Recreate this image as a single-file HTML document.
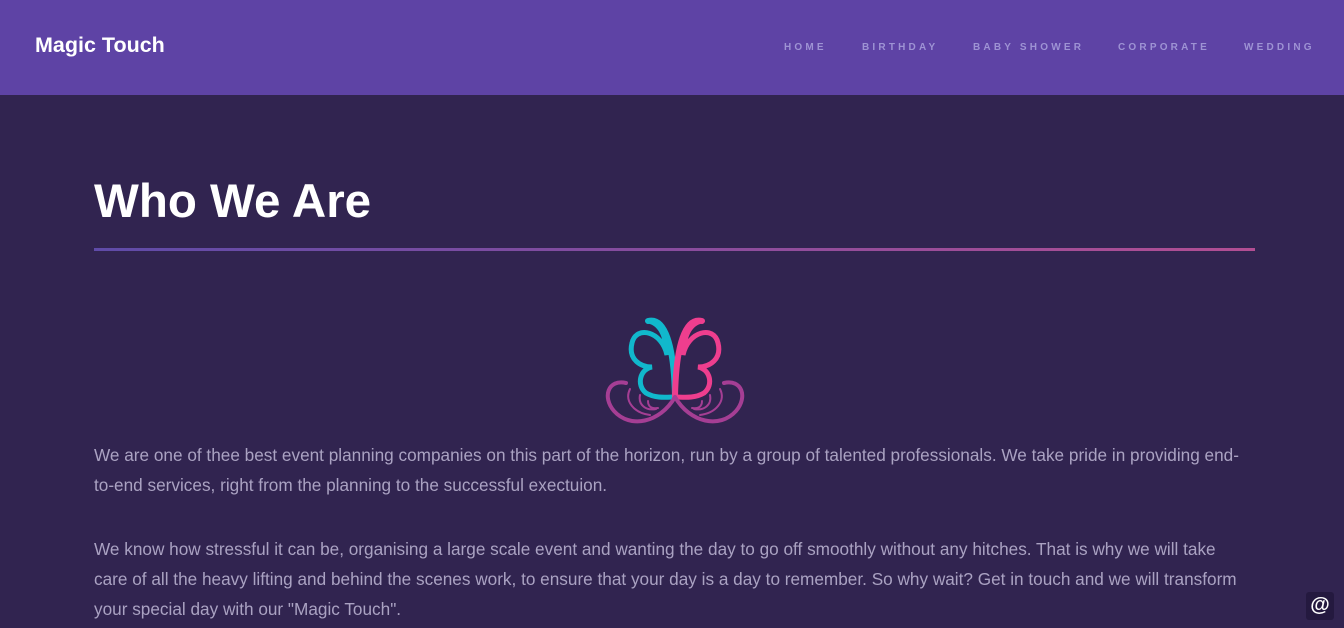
<!DOCTYPE html>
<html><head><meta charset="utf-8"><style>
html,body{margin:0;padding:0;width:1344px;height:628px;overflow:hidden;background:#312450;font-family:"Liberation Sans",Arial,sans-serif}
header{height:95px;background:#5e43a5;position:relative}
.logo{position:absolute;left:35px;top:33px;color:#fff;font-weight:bold;font-size:21.5px}
nav{position:absolute;top:42px;left:0;width:1344px;font-size:10px;font-weight:bold;letter-spacing:3.2px;color:#9e93d4}
nav span{position:absolute;white-space:nowrap}
h1{position:absolute;left:94px;top:174px;margin:0;color:#fff;font-size:47.5px;font-weight:bold}
.line{position:absolute;left:94px;top:248px;width:1161px;height:3px;background:linear-gradient(90deg,#5f4ba8,#b24e93)}
p{position:absolute;left:94px;width:1152px;margin:0;color:#aaa2c2;font-size:17.2px;line-height:30px}
.at{position:absolute;left:1306px;top:592px;width:28px;height:28px;background:#24193f;border-radius:3px;color:#fff;font-weight:bold;font-size:20px;text-align:center;line-height:27px}
</style></head><body>
<header><div class="logo">Magic Touch</div>
<nav><span style="left:784px">HOME</span><span style="left:862px">BIRTHDAY</span><span style="left:973px">BABY SHOWER</span><span style="left:1118px">CORPORATE</span><span style="left:1244px">WEDDING</span></nav>
</header>
<h1>Who We Are</h1>
<div class="line"></div>
<svg style="position:absolute;left:590px;top:305px" width="170" height="130" viewBox="0 0 170 130">
<g fill="none" stroke-linecap="round">
<path d="M58 16 C75 12 84 40 85 92" stroke="#11b8cc" stroke-width="6"/>
<path d="M58 16 C70 18 76 30 77 50 C72 26 46 20 42 38 C38 54 50 62 62 62 C50 64 46 80 56 88 C66 94 78 92 85 92" stroke="#11b8cc" stroke-width="5"/>
<path d="M112 16 C95 12 86 40 85 92" stroke="#ee3e8e" stroke-width="6"/>
<path d="M112 16 C100 18 94 30 93 50 C98 26 124 20 128 38 C132 54 120 62 108 62 C120 64 124 80 114 88 C104 94 92 92 85 92" stroke="#ee3e8e" stroke-width="5"/>
<path d="M36 78 C18 74 12 92 24 106 C40 124 70 118 85 92" stroke="#a53e94" stroke-width="4"/>
<path d="M134 78 C152 74 158 92 146 106 C130 124 100 118 85 92" stroke="#a53e94" stroke-width="4"/>
<path d="M50 90 C48 100 56 106 66 104 M58 96 C58 102 62 104 68 103 M40 84 C34 96 44 108 60 110" stroke="#a53e94" stroke-width="2"/>
<path d="M120 90 C122 100 114 106 104 104 M112 96 C112 102 108 104 102 103 M130 84 C136 96 126 108 110 110" stroke="#a53e94" stroke-width="2"/>
</g></svg>
<p style="top:440px">We are one of thee best event planning companies on this part of the horizon, run by a group of talented professionals. We take pride in providing end-to-end services, right from the planning to the successful exectuion.</p>
<p style="top:534px">We know how stressful it can be, organising a large scale event and wanting the day to go off smoothly without any hitches. That is why we will take care of all the heavy lifting and behind the scenes work, to ensure that your day is a day to remember. So why wait? Get in touch and we will transform your special day with our "Magic Touch".</p>
<div class="at">@</div>
</body></html>
